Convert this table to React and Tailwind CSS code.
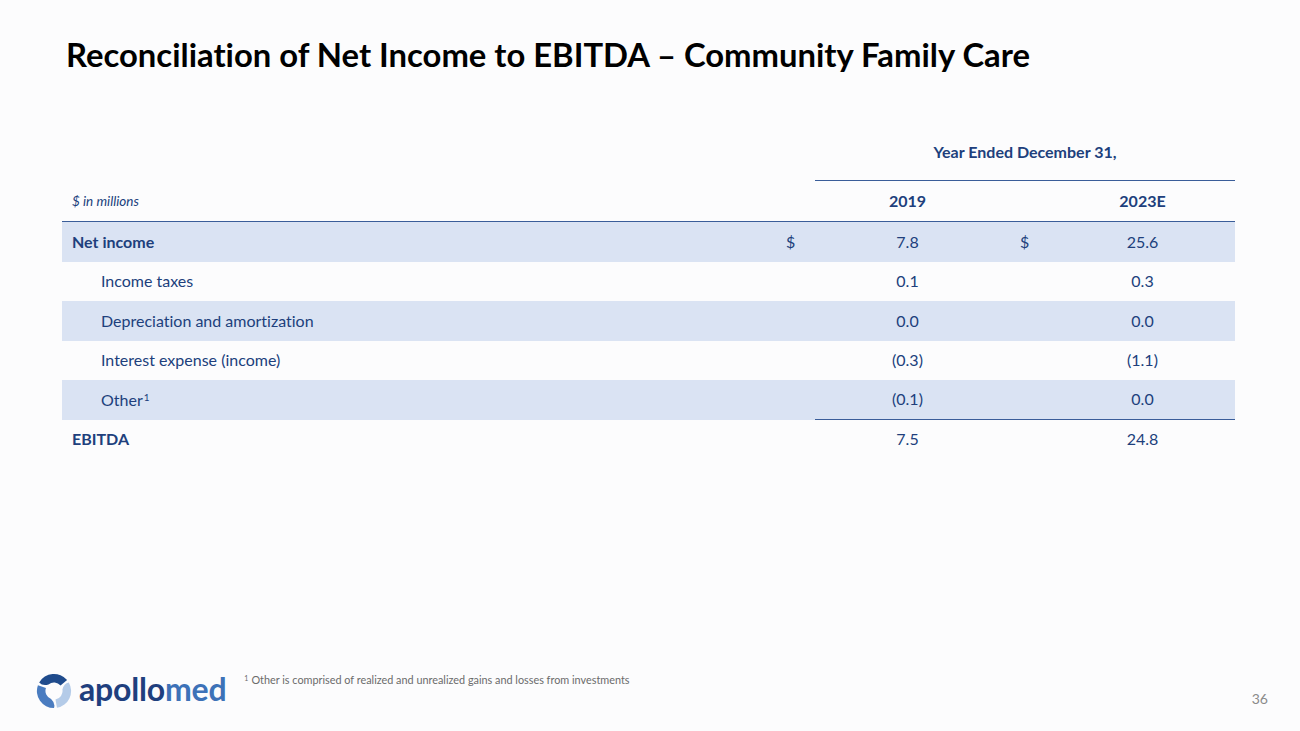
import React from "react";

const rows = [
  { label: "Net income", bold: true, shaded: true, dollar: true, a: "7.8", b: "25.6" },
  { label: "Income taxes", a: "0.1", b: "0.3" },
  { label: "Depreciation and amortization", shaded: true, a: "0.0", b: "0.0" },
  { label: "Interest expense (income)", a: "(0.3)", b: "(1.1)" },
  { label: "Other", sup: "1", shaded: true, a: "(0.1)", b: "0.0", rule: true },
  { label: "EBITDA", bold: true, a: "7.5", b: "24.8" },
];

const cols = "grid grid-cols-[718px_35px_185px_50px_185px]";

function Logo() {
  const seg = "M4.41 11 A18 18 0 0 1 33.79 8.43 L26.89 14.21 A9 9 0 0 0 14.21 13.11 Q8 15 4.41 11 Z";
  return (
    <div className="flex items-center gap-[6px]">
      <svg width="38" height="38" viewBox="0 0 40 40">
        <path d={seg} fill="#1f4b8c" />
        <path d={seg} fill="#b4cbe8" transform="rotate(120 20 20)" />
        <path d={seg} fill="#4a7cc0" transform="rotate(240 20 20)" />
      </svg>
      <div className="text-[32px] font-bold leading-none tracking-[-0.2px] pb-[5px]">
        <span className="text-[#1f3f7e]">apollo</span>
        <span className="text-[#3d72b8]">med</span>
      </div>
    </div>
  );
}

export default function App() {
  return (
    <div
      className="w-[1300px] h-[731px] bg-[#fcfcfd] flex flex-col overflow-hidden [font-variant-ligatures:none]"
      style={{ fontFamily: "Lato, 'Open Sans', sans-serif" }}
    >
      <h1 className="pl-[66px] pt-[35px] text-[32.8px] leading-[40px] font-bold text-black">
        Reconciliation of Net Income to EBITDA – Community Family Care
      </h1>

      <div className="ml-[62px] mt-[56px] w-[1173px] text-[#203f7c] text-[16px]">
        <div className={`${cols} h-[50px]`}>
          <div className="col-span-2" />
          <div className="col-span-3 border-b-[1.5px] border-[#3a5d99] flex items-start justify-center pt-[9px] font-bold">
            Year Ended December 31,
          </div>
        </div>
        <div className={`${cols} h-[41px] items-center border-b-[1.5px] border-[#3a5d99]`}>
          <div className="pl-[10px] italic text-[13.5px]">$ in millions</div>
          <div />
          <div className="text-center font-bold">2019</div>
          <div />
          <div className="text-center font-bold">2023E</div>
        </div>
        {rows.map((r) => (
          <div key={r.label} className={`${cols} h-[39.5px] items-center ${r.shaded ? "bg-[#dae3f3]" : ""}`}>
            <div className={r.bold ? "pl-[10px] font-bold" : "pl-[39px]"}>
              {r.label}
              {r.sup && <sup className="text-[10px] ml-[1px]">{r.sup}</sup>}
            </div>
            <div className="pl-[6px]">{r.dollar ? "$" : ""}</div>
            <div className={`h-full flex items-center justify-center ${r.rule ? "border-b-[1.5px] border-[#3a5d99]" : ""}`}>{r.a}</div>
            <div className={`h-full flex items-center pl-[20px] ${r.rule ? "border-b-[1.5px] border-[#3a5d99]" : ""}`}>{r.dollar ? "$" : ""}</div>
            <div className={`h-full flex items-center justify-center ${r.rule ? "border-b-[1.5px] border-[#3a5d99]" : ""}`}>{r.b}</div>
          </div>
        ))}
      </div>

      <div className="flex-1" />

      <div className="h-[62px] flex items-start">
        <div className="ml-[35px] mt-[3px]">
          <Logo />
        </div>
        <div className="ml-[18px] mt-[3px] text-[10.85px] text-[#6b6b6b]">
          <sup className="text-[7px] mr-[3px]">1</sup>
          Other is comprised of realized and unrealized gains and losses from investments
        </div>
        <div className="ml-auto mr-[32px] mt-[19px] text-[14px] text-[#8a8a8a]">36</div>
      </div>
    </div>
  );
}
